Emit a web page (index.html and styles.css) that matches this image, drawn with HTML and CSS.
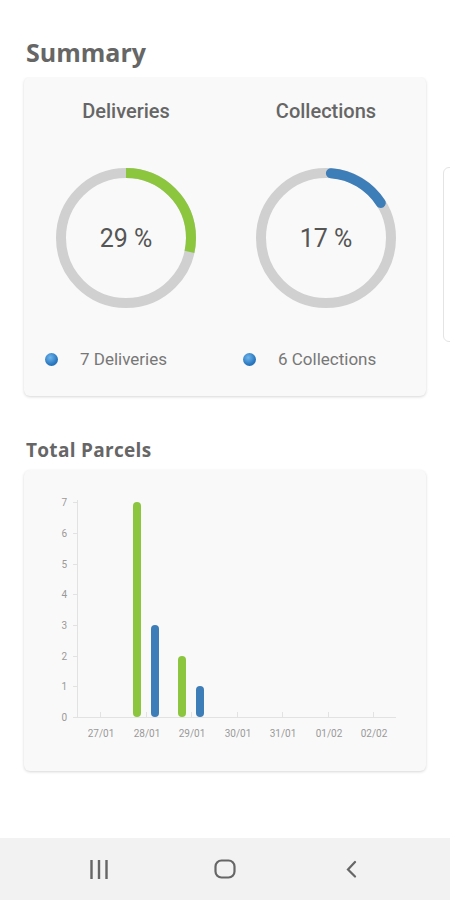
FILE: index.html
```html
<!DOCTYPE html>
<html lang="en">
  <head>
    <meta charset="UTF-8" />
    <meta name="viewport" content="width=device-width, initial-scale=1" />
    <title>Summary</title>
    <link rel="stylesheet" href="styles.css">
  </head>
  <body>
    <div class="screen">
      <div class="content">
        <h2 class="section-title summary-title">Summary</h2>
        <div class="carousel">
          <div class="card summary-card">
            <div class="stat">
              <div class="stat-title">Deliveries</div>
              <div class="donut">
                <svg width="140" height="140" viewBox="0 0 140 140">
                  <circle cx="70" cy="70" r="65" fill="none" stroke="#d0d0d0" stroke-width="10" />
                  <circle cx="70" cy="70" r="65" fill="none" stroke="#8cc63f" stroke-width="10"
                    stroke-dasharray="116 408.4" transform="rotate(-90 70 70)" />
                </svg>
                <div class="donut-value">29 %</div>
              </div>
              <div class="legend"><span class="dot"></span>7 Deliveries</div>
            </div>
            <div class="stat">
              <div class="stat-title">Collections</div>
              <div class="donut">
                <svg width="140" height="140" viewBox="0 0 140 140">
                  <circle cx="70" cy="70" r="65" fill="none" stroke="#d0d0d0" stroke-width="10" />
                  <circle cx="70" cy="70" r="65" fill="none" stroke="#3d7db8" stroke-width="10"
                    stroke-linecap="round" stroke-dasharray="60 348.4" stroke-dashoffset="-5"
                    transform="rotate(-90 70 70)" />
                </svg>
                <div class="donut-value">17 %</div>
              </div>
              <div class="legend"><span class="dot"></span>6 Collections</div>
            </div>
          </div>
          <div class="card next-card"></div>
        </div>

        <h2 class="section-title parcels-title">Total Parcels</h2>
        <div class="card chart-card">
          <svg class="chart" width="402" height="301" viewBox="0 0 402 301">
            <g class="axis" stroke="#e2e2e2" stroke-width="1">
              <line x1="53.5" y1="30" x2="53.5" y2="247" />
              <line x1="53" y1="247.5" x2="372" y2="247.5" />
              <line x1="49" y1="32.5" x2="53" y2="32.5" />
              <line x1="49" y1="63.5" x2="53" y2="63.5" />
              <line x1="49" y1="94.5" x2="53" y2="94.5" />
              <line x1="49" y1="124.5" x2="53" y2="124.5" />
              <line x1="49" y1="155.5" x2="53" y2="155.5" />
              <line x1="49" y1="186.5" x2="53" y2="186.5" />
              <line x1="49" y1="216.5" x2="53" y2="216.5" />
              <line x1="49" y1="247.5" x2="53" y2="247.5" />
              <line x1="76.5" y1="242" x2="76.5" y2="247" />
              <line x1="122.5" y1="242" x2="122.5" y2="247" />
              <line x1="167.5" y1="242" x2="167.5" y2="247" />
              <line x1="213.5" y1="242" x2="213.5" y2="247" />
              <line x1="258.5" y1="242" x2="258.5" y2="247" />
              <line x1="304.5" y1="242" x2="304.5" y2="247" />
              <line x1="349.5" y1="242" x2="349.5" y2="247" />
            </g>
            <g class="y-labels" text-anchor="end">
              <text x="43" y="36">7</text>
              <text x="43" y="67">6</text>
              <text x="43" y="98">5</text>
              <text x="43" y="128">4</text>
              <text x="43" y="159">3</text>
              <text x="43" y="190">2</text>
              <text x="43" y="220">1</text>
              <text x="43" y="251">0</text>
            </g>
            <g class="x-labels" text-anchor="middle">
              <text x="77" y="267">27/01</text>
              <text x="123" y="267">28/01</text>
              <text x="168" y="267">29/01</text>
              <text x="214" y="267">30/01</text>
              <text x="259" y="267">31/01</text>
              <text x="305" y="267">01/02</text>
              <text x="350" y="267">02/02</text>
            </g>
            <g stroke-width="8" stroke-linecap="round">
              <line x1="113" y1="36" x2="113" y2="243" stroke="#8cc63f" />
              <line x1="131" y1="159" x2="131" y2="243" stroke="#3d7db8" />
              <line x1="158" y1="190" x2="158" y2="243" stroke="#8cc63f" />
              <line x1="176" y1="220" x2="176" y2="243" stroke="#3d7db8" />
            </g>
          </svg>
        </div>
      </div>

      <div class="navbar">
        <div class="nav-item">
          <svg width="20" height="19" viewBox="0 0 20 19">
            <path d="M2.5 0v19M10 0v19M17.5 0v19" stroke="#666" stroke-width="2.4" fill="none" />
          </svg>
        </div>
        <div class="nav-item">
          <svg width="22" height="20" viewBox="0 0 22 20">
            <rect x="1.5" y="1.5" width="19" height="17" rx="6" stroke="#666" stroke-width="2.2" fill="none" />
          </svg>
        </div>
        <div class="nav-item">
          <svg width="14" height="18" viewBox="0 0 14 18">
            <path d="M11 2L4 9.5l7 7" stroke="#666" stroke-width="2.2" fill="none" stroke-linecap="round" />
          </svg>
        </div>
      </div>
    </div>
  </body>
</html>
```

FILE: styles.css
```css
body {
  margin: 0;
  background: #fff;
  font-family: Roboto, "Open Sans", sans-serif;
}
.screen {
  width: 450px;
  height: 900px;
  display: flex;
  flex-direction: column;
  overflow: hidden;
}
.content {
  flex: 1;
  padding-top: 37px;
}
.section-title {
  margin: 0;
  padding-left: 26px;
  font-family: "Open Sans", sans-serif;
  font-weight: 700;
  color: #666;
}
.summary-title {
  font-size: 25px;
  line-height: 31px;
  margin-bottom: 9px;
}
.parcels-title {
  font-size: 19px;
  line-height: 24px;
  letter-spacing: 0.3px;
  margin-top: 38px;
  margin-bottom: 8px;
}
.carousel {
  display: flex;
  gap: 17px;
  padding-left: 24px;
  overflow: hidden;
  padding-bottom: 4px;
}
.card {
  background: #f9f9f9;
  border-radius: 6px;
  box-shadow: 0 1px 3px rgba(0, 0, 0, 0.16);
  flex-shrink: 0;
}
.summary-card {
  width: 402px;
  height: 319px;
  display: flex;
}
.next-card {
  width: 402px;
  height: 173px;
  margin-top: 90px;
  background: #fff;
  border: 1px solid #e4e4e4;
  box-shadow: none;
}
.stat {
  flex: 1;
  display: flex;
  flex-direction: column;
  align-items: center;
  padding-top: 21px;
}
.stat:first-child {
  padding-left: 2px;
}
.stat-title {
  font-size: 20px;
  line-height: 26px;
  font-weight: 500;
  color: #666;
}
.donut {
  position: relative;
  width: 140px;
  height: 140px;
  margin-top: 44px;
}
.donut svg {
  display: block;
}
.donut-value {
  position: absolute;
  inset: 0;
  display: flex;
  align-items: center;
  justify-content: center;
  font-size: 25px;
  color: #555;
}
.legend {
  align-self: stretch;
  display: flex;
  align-items: center;
  margin-top: 40px;
  padding-left: 17px;
  font-size: 17px;
  line-height: 22px;
  color: #777;
}
.dot {
  width: 13px;
  height: 13px;
  border-radius: 50%;
  margin-right: 22px;
  background: radial-gradient(circle at 40% 35%, #6fb6ec, #2a78c0 60%, #1d5f9e);
}
.stat:first-child .legend {
  padding-left: 19px;
}
.chart-card {
  margin: 0 24px;
  height: 301px;
}
.chart {
  display: block;
}
.chart text {
  font-family: Roboto, sans-serif;
  font-size: 10px;
  fill: #999;
}
.navbar {
  height: 62px;
  background: #f2f2f2;
  display: flex;
  justify-content: center;
  align-items: center;
}
.nav-item {
  width: 126px;
  display: flex;
  justify-content: center;
}
.nav-item svg {
  display: block;
}
```
